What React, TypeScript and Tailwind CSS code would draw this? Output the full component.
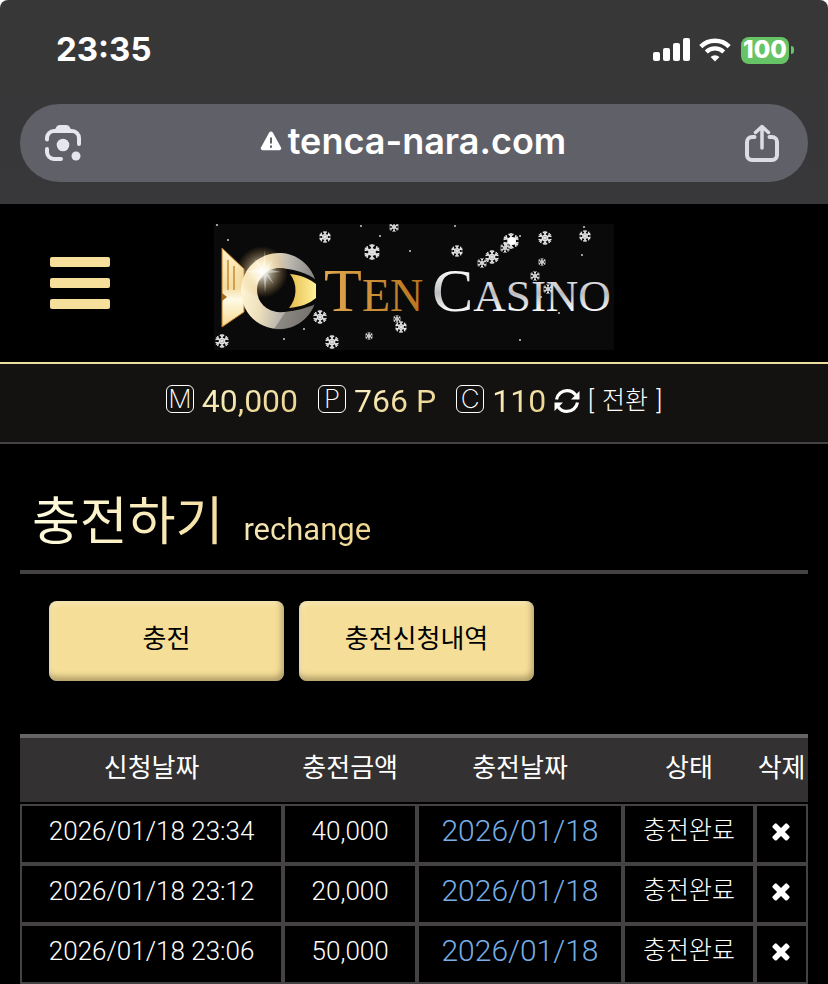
import React from "react";

interface Recharge {
  requestedAt: string;
  amount: string;
  chargedAt: string;
  status: string;
}

const recharges: Recharge[] = [
  { requestedAt: "2026/01/18 23:34", amount: "40,000", chargedAt: "2026/01/18", status: "충전완료" },
  { requestedAt: "2026/01/18 23:12", amount: "20,000", chargedAt: "2026/01/18", status: "충전완료" },
  { requestedAt: "2026/01/18 23:06", amount: "50,000", chargedAt: "2026/01/18", status: "충전완료" },
];

// x, y, radius
const snowflakes = [
  [111, 13, 6],
  [158, 28, 8],
  [180, 3, 5],
  [243, 27, 6],
  [268, 39, 5],
  [278, 33, 7],
  [291, 24, 5],
  [297, 17, 8],
  [331, 14, 7],
  [328, 38, 4],
  [371, 12, 6],
  [321, 52, 5],
  [334, 65, 5],
  [106, 93, 7],
  [118, 118, 7],
  [155, 112, 4],
  [183, 95, 4],
  [187, 103, 6],
  [8, 117, 7],
];

const specks = [
  [3, 1],
  [14, 16],
  [147, 2],
  [166, 12],
  [196, 27],
  [241, 2],
  [306, 12],
  [368, 31],
  [370, 3],
  [90, 105],
  [70, 115],
  [306, 116],
  [345, 89],
  [327, 73],
];

const SignalIcon = () => (
  <svg width="38" height="24" viewBox="0 0 38 24" fill="#fff" aria-hidden="true">
    <rect x="0" y="14" width="7" height="9" rx="2" />
    <rect x="10" y="10" width="7" height="13" rx="2" />
    <rect x="20" y="5" width="7" height="18" rx="2" />
    <rect x="30" y="0" width="7" height="23" rx="2" />
  </svg>
);

const WifiIcon = () => (
  <svg width="32" height="24" viewBox="0 0 32 24" fill="none" stroke="#fff" aria-hidden="true">
    <path d="M1.8 8.6a20.2 20.2 0 0 1 28.4 0" strokeWidth="4.4" />
    <path d="M7.3 14a12.4 12.4 0 0 1 17.4 0" strokeWidth="4.2" />
    <path d="M16 23.5l-4.4-4.5a6.3 6.3 0 0 1 8.8 0z" fill="#fff" stroke="none" />
  </svg>
);

const LensIcon = () => (
  <svg width="38" height="38" viewBox="0 0 38 38" fill="none" stroke="#e6e6ee" strokeWidth="4" aria-hidden="true">
    <path d="M3 15.5V14a7 7 0 0 1 7-7h18a7 7 0 0 1 7 7v6" strokeLinecap="round" />
    <path d="M3 25v3a7 7 0 0 0 7 7h7" strokeLinecap="round" />
    <path d="M10 7l2.5-4.2Q13.5 1 15.5 1h7q2 0 3 1.8L28 7z" fill="#e6e6ee" stroke="none" />
    <circle cx="19" cy="21" r="6.3" fill="#e6e6ee" stroke="none" />
    <circle cx="32" cy="32" r="4.5" fill="#e6e6ee" stroke="none" />
  </svg>
);

const ShareIcon = () => (
  <svg
    width="36"
    height="38"
    viewBox="0 0 36 38"
    fill="none"
    stroke="#dcdce2"
    strokeWidth="4"
    strokeLinecap="round"
    strokeLinejoin="round"
    aria-hidden="true"
  >
    <path d="M10.5 13H8a5 5 0 0 0-5 5v13a5 5 0 0 0 5 5h20a5 5 0 0 0 5-5V18a5 5 0 0 0-5-5h-2.5" />
    <path d="M18 24V3M11.5 8.5L18 2.5l6.5 6" strokeWidth="3.5" />
  </svg>
);

const WarningIcon = () => (
  <svg width="22" height="20" viewBox="0 0 22 20" aria-hidden="true">
    <path
      d="M9.2 1.6a2.1 2.1 0 0 1 3.6 0l8.1 14.6a2 2 0 0 1-1.8 3.1H2.9a2 2 0 0 1-1.8-3.1z"
      fill="#fff"
    />
    <path d="M11 6.5v6M11 14.5v2.2" stroke="#606168" strokeWidth="2" />
  </svg>
);

const RefreshIcon = () => (
  <svg width="26" height="26" viewBox="0 0 26 26" fill="none" stroke="#fff" strokeWidth="3.2" aria-hidden="true">
    <path d="M2.5 11.5C3.5 6 8 2.6 13 2.6c3.8 0 6.8 1.6 8.8 4.6" />
    <path d="M23.5 14.5C22.5 20 18 23.4 13 23.4c-3.8 0-6.8-1.6-8.8-4.6" />
    <path d="M25.5 3v8.5h-8.5z" fill="#fff" stroke="none" />
    <path d="M.5 23v-8.5h8.5z" fill="#fff" stroke="none" />
  </svg>
);

const CloseIcon = () => (
  <svg width="26" height="26" viewBox="0 0 1792 1792" fill="#fff" aria-hidden="true">
    <path d="M1490 1322q0 40-28 68l-136 136q-28 28-68 28t-68-28l-294-294-294 294q-28 28-68 28t-68-28l-136-136q-28-28-28-68t28-68l294-294-294-294q-28-28-28-68t28-68l136-136q28-28 68-28t68 28l294 294 294-294q28-28 68-28t68 28l136 136q28 28 28 68t-28 68l-294 294 294 294q28 28 28 68z" />
  </svg>
);

const Logo = () => (
  <svg width="400" height="126" viewBox="0 0 400 126" role="img" aria-label="Ten Casino">
    <defs>
      <linearGradient id="tail" x1="0" y1="0" x2="0" y2="1">
        <stop offset="0" stopColor="#fff3c8" />
        <stop offset="0.5" stopColor="#f4dba0" />
        <stop offset="0.65" stopColor="#fffbe6" />
        <stop offset="1" stopColor="#f6d890" />
      </linearGradient>
      <linearGradient id="ring" x1="0" y1="0.4" x2="1" y2="0.6">
        <stop offset="0" stopColor="#fff6d6" />
        <stop offset="0.3" stopColor="#efe0bc" />
        <stop offset="0.6" stopColor="#b8b5ae" />
        <stop offset="1" stopColor="#7c7a78" />
      </linearGradient>
      <linearGradient id="pupil" x1="0" y1="0" x2="1" y2="0">
        <stop offset="0" stopColor="#e6bd4c" />
        <stop offset="1" stopColor="#fff09a" />
      </linearGradient>
      <linearGradient id="gold" x1="0" y1="0" x2="1" y2="0">
        <stop offset="0" stopColor="#e0a850" />
        <stop offset="1" stopColor="#b8741c" />
      </linearGradient>
      <linearGradient id="silver" x1="0" y1="0" x2="0" y2="1">
        <stop offset="0.2" stopColor="#ffffff" />
        <stop offset="0.55" stopColor="#bcbcc0" />
        <stop offset="0.8" stopColor="#f8f8f8" />
      </linearGradient>
      <radialGradient id="flare">
        <stop offset="0" stopColor="#fff" />
        <stop offset="0.35" stopColor="#fff6d8" stopOpacity="0.6" />
        <stop offset="1" stopColor="#e0a040" stopOpacity="0" />
      </radialGradient>
      <g id="flake" stroke="#e4e4e4" strokeWidth="0.2" fill="none">
        <path d="M0-1V1M-.87-.5L.87.5M-.87.5L.87-.5" />
        <path d="M-.3-.9L0-.6.3-.9M-.3.9L0 .6.3.9M-.93-.2L-.52-.3-.63-.72M.93-.2L.52-.3.63-.72M-.93.2L-.52.3-.63.72M.93.2L.52.3.63.72" />
        <circle r="0.38" />
      </g>
    </defs>
    <rect width="400" height="126" fill="#0a0a0b" />

    {/* fish mark */}
    <path d="M8 24l22 21v43L8 103z" fill="url(#tail)" stroke="#c07a20" strokeWidth="1" />
    <path d="M14 36v30M20 42v24" stroke="#c58b35" strokeWidth="1.5" />
    <path d="M8 69l5 4-5 4z" fill="#a36a1e" />
    <path d="M101 55A38 38 0 1 0 101 79z" fill="url(#ring)" />
    <path d="M101 79A38 38 0 0 1 60 105c4-6 9-13 12-18 12-1 22-4 29-8z" fill="#6f6b66" opacity="0.6" />
    <circle cx="65" cy="66" r="22" fill="#0a0a0b" />
    <path d="M62 44c16 0 32 5 40 12v24c-10 4-26 9-40 8z" fill="#0a0a0b" />
    <path d="M76 50c11 1 20 5 26 10v14c-7 6-16 9-27 10 8-9 9-24 1-34z" fill="url(#pupil)" />
    <circle cx="48" cy="48" r="26" fill="url(#flare)" />
    <path
      d="M51 26l.7 18 7-8-5 9 13 3-13 1 6 11-7-8-1.700 17-1.300-17-8 8 5-11-17-1 17-3-6-10 8 8z"
      fill="#fff"
      opacity="0.45"
    />

    <g fontFamily="'Liberation Serif', serif">
      <text x="110" y="87" fontSize="62" fill="url(#gold)">
        T<tspan fontSize="46">EN</tspan>
      </text>
      <text x="218" y="87" fontSize="62" fill="url(#silver)">
        C<tspan fontSize="45">ASINO</tspan>
      </text>
    </g>

    {snowflakes.map(([x, y, r]) => (
      <use key={`${x}-${y}`} href="#flake" transform={`translate(${x} ${y}) scale(${r})`} />
    ))}
    <circle cx="298" cy="17" r="4" fill="#fff" />
    {specks.map(([x, y]) => (
      <circle key={`${x}-${y}`} cx={x} cy={y} r="1" fill="#ccc" />
    ))}
  </svg>
);

const LetterBadge = ({ letter }: { letter: string }) => (
  <span className="mb-1 flex h-7 w-7 items-center justify-center rounded-md border border-white font-['Inter',sans-serif] text-[26px] leading-none font-extralight text-white">
    {letter}
  </span>
);

const Balance = ({ letter, value }: { letter: string; value: string }) => (
  <div className="flex items-center gap-2">
    <LetterBadge letter={letter} />
    <span className="bg-linear-to-br from-[#fff6cc] to-[#e6cd80] bg-clip-text text-[32px] leading-10 text-transparent">
      {value}
    </span>
  </div>
);

const BrowserBar = () => (
  <div className="bg-white">
    <div className="rounded-t-lg bg-linear-to-b from-[#373737] to-[#38383b] px-5 pb-[22px] font-['Inter',sans-serif] text-white">
      <div className="flex h-[104px] items-center justify-between pr-3.5 pb-1 pl-9">
        <span className="text-[33px] font-bold">23:35</span>
        <div className="flex items-center gap-2">
          <SignalIcon />
          <WifiIcon />
          <div className="flex items-center gap-0.5 pl-0.5">
            <span className="flex h-[27px] w-12 items-center justify-center rounded-lg bg-[#67c466] text-2xl leading-none font-extrabold">
              100
            </span>
            <span className="h-2 w-[3px] rounded-r-full bg-[#67c466]" />
          </div>
        </div>
      </div>
      <div className="flex h-[78px] items-center justify-between rounded-full bg-[#606168] pr-7 pl-6">
        <button type="button" aria-label="Lens">
          <LensIcon />
        </button>
        <a href="#" className="flex items-center gap-1.5 pb-1">
          <WarningIcon />
          <span className="text-4xl leading-none font-semibold">tenca-nara.com</span>
        </a>
        <button type="button" aria-label="Share">
          <ShareIcon />
        </button>
      </div>
    </div>
  </div>
);

const SiteHeader = () => (
  <header className="grid grid-cols-[1fr_auto_1fr] items-center border-b-2 border-[#ecdda0] pt-5 pb-3">
    <button type="button" aria-label="Menu" className="ml-[50px] flex w-15 flex-col gap-[11px] pb-2">
      <span className="h-2.5 w-full rounded-xs bg-[#f6df9a]" />
      <span className="h-2.5 w-full rounded-xs bg-[#f6df9a]" />
      <span className="h-2.5 w-full rounded-xs bg-[#f6df9a]" />
    </button>
    <a href="#">
      <Logo />
    </a>
  </header>
);

const BalanceBar = () => (
  <div className="flex h-20 items-center justify-center gap-5 border-b-2 border-[#444242] bg-[#131210] pb-1">
    <Balance letter="M" value="40,000" />
    <Balance letter="P" value="766 P" />
    <div className="flex items-center gap-2">
      <Balance letter="C" value="110" />
      <button type="button" className="flex items-center gap-2 text-[25px] leading-10 font-light text-white">
        <RefreshIcon />
        <span className="flex gap-2">
          <span>[</span>
          <span>전환</span>
          <span>]</span>
        </span>
      </button>
    </div>
  </div>
);

const tabClass =
  "h-20 w-[235px] rounded-lg bg-[#f5df98] pb-1 text-[26px] text-black shadow-[inset_-2px_-4px_6px_rgba(90,70,40,0.45),inset_2px_2px_5px_rgba(255,255,255,0.4)]";

const cellClass = "h-[60px] border-2 border-[#444242] pb-1.5";

const RechargeTable = () => (
  <table className="w-full table-fixed border-separate border-spacing-0 text-center">
    <thead>
      <tr className="h-[70px] text-[26px] whitespace-nowrap text-white">
        <th className="w-[33.4%] border-t-4 border-b-2 border-t-[#666464] border-b-black bg-[#333131] pb-1 font-normal">
          신청날짜
        </th>
        <th className="w-[17%] border-t-4 border-b-2 border-t-[#666464] border-b-black bg-[#333131] pb-1 font-normal">
          충전금액
        </th>
        <th className="w-[26.1%] border-t-4 border-b-2 border-t-[#666464] border-b-black bg-[#333131] pb-1 font-normal">
          충전날짜
        </th>
        <th className="w-[16.8%] border-t-4 border-b-2 border-t-[#666464] border-b-black bg-[#333131] pb-1 font-normal">
          상태
        </th>
        <th className="border-t-4 border-b-2 border-t-[#666464] border-b-black bg-[#333131] pb-1 font-normal">
          삭제
        </th>
      </tr>
    </thead>
    <tbody className="text-[26px] leading-10 font-light text-white">
      {recharges.map((item) => (
        <tr key={item.requestedAt}>
          <td className={cellClass}>{item.requestedAt}</td>
          <td className={cellClass}>{item.amount}</td>
          <td className={`${cellClass} text-3xl text-[#76aee6]`}>{item.chargedAt}</td>
          <td className={`${cellClass} text-[25px]`}>{item.status}</td>
          <td className={cellClass}>
            <button type="button" aria-label="삭제" className="flex w-full justify-center pr-0.5">
              <CloseIcon />
            </button>
          </td>
        </tr>
      ))}
    </tbody>
  </table>
);

export default function App() {
  return (
    <div className="min-h-screen bg-black font-['Roboto','Noto_Sans_CJK_KR',sans-serif]">
      <BrowserBar />
      <SiteHeader />
      <BalanceBar />
      <main className="px-5">
        <h1 className="flex h-[130px] items-baseline gap-5 border-b-4 border-[#444242] px-3 pt-10">
          <span className="bg-linear-to-r from-[#fffde0] to-[#f5dfa0] bg-clip-text text-[52px] text-transparent">
            충전하기
          </span>
          <span className="bg-linear-to-r from-[#f5e8b8] to-[#f0d890] bg-clip-text text-[31px] text-transparent">
            rechange
          </span>
        </h1>
        <div className="mb-[53px] flex gap-[15px] px-[29px] pt-[27px]">
          <button type="button" className={tabClass}>
            충전
          </button>
          <button type="button" className={tabClass}>
            충전신청내역
          </button>
        </div>
        <RechargeTable />
      </main>
    </div>
  );
}
